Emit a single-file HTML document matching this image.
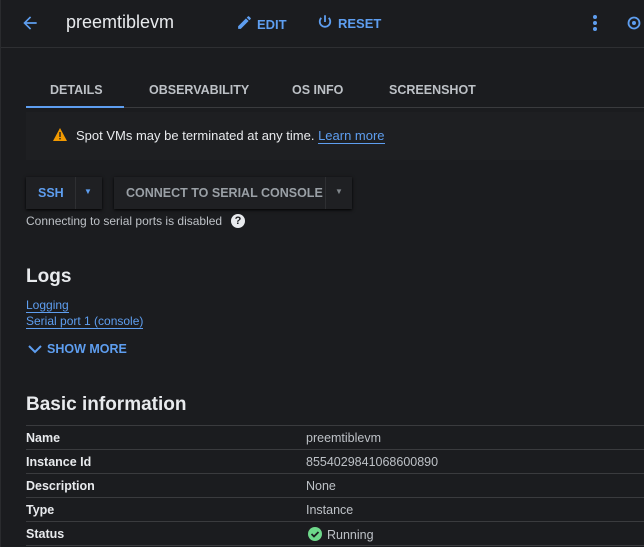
<!DOCTYPE html>
<html><head><style>
*{margin:0;padding:0;box-sizing:border-box}
body{width:644px;height:547px;overflow:hidden;background:#1b1c1f;font-family:"Liberation Sans",sans-serif;color:#e8eaed;position:relative;border-left:1px solid #2a2b2e}
.a{position:absolute;white-space:nowrap}
.blue{color:#5e9ef0}
.tab{font-size:12.5px;font-weight:bold;color:#bdc1c6;top:83px}
.hr{position:absolute;height:1px;background:#3a3b3e}
.row{position:absolute;left:25px;right:0;height:24px;border-top:1px solid #3a3b3e;font-size:12.5px}
.row b{position:absolute;left:0;top:5px;color:#e8eaed}
.row span{position:absolute;left:280px;top:5px;color:#bdc1c6}
</style></head><body>
<svg class="a" style="left:19px;top:13px" width="20" height="20" viewBox="0 0 24 24"><path d="M20 11H7.8l5.6-5.6L12 4l-8 8 8 8 1.4-1.4L7.8 13H20z" fill="#5e9ef0"/></svg>
<div class="a" style="left:65px;top:12px;font-size:18px;color:#e8eaed">preemtiblevm</div>
<svg class="a" style="left:235px;top:14px" width="17" height="17" viewBox="0 0 24 24"><path d="M3 17.25V21h3.75L17.8 9.94l-3.75-3.75zM20.7 7.04a1 1 0 000-1.41l-2.34-2.34a1 1 0 00-1.41 0l-1.83 1.83 3.75 3.75z" fill="#5e9ef0"/></svg>
<div class="a blue" style="left:256px;top:17px;font-size:13px;font-weight:bold">EDIT</div>
<svg class="a" style="left:315px;top:13px" width="18" height="18" viewBox="0 0 24 24"><path d="M12 3v9M7 6.5a7 7 0 1010 0" stroke="#5e9ef0" stroke-width="2.4" fill="none"/></svg>
<div class="a blue" style="left:337px;top:16px;font-size:13px;font-weight:bold">RESET</div>
<svg class="a" style="left:590px;top:14px" width="8" height="18"><circle cx="4" cy="3" r="2" fill="#5e9ef0"/><circle cx="4" cy="9" r="2" fill="#5e9ef0"/><circle cx="4" cy="15" r="2" fill="#5e9ef0"/></svg>
<svg class="a" style="left:626px;top:16px" width="14" height="14" viewBox="0 0 14 14"><circle cx="7" cy="7" r="5.5" stroke="#5e9ef0" stroke-width="1.8" fill="none"/><circle cx="7" cy="7" r="2" fill="#5e9ef0"/></svg>
<div class="hr" style="left:0;right:0;top:47px;background:#2e2f32"></div>
<div class="a tab blue" style="left:49px">DETAILS</div>
<div class="a tab" style="left:148px">OBSERVABILITY</div>
<div class="a tab" style="left:291px">OS INFO</div>
<div class="a tab" style="left:388px">SCREENSHOT</div>
<div class="hr" style="left:25px;right:0;top:107px"></div>
<div class="a" style="left:25px;top:106px;width:98px;height:2px;background:#5e9ef0"></div>
<div class="a" style="left:25px;top:112px;right:0;height:48px;background:#1e1f22"></div>
<svg class="a" style="left:52px;top:128px" width="14" height="13" viewBox="0 0 14 13"><path d="M7 0L14 13H0z" fill="#f29900"/><rect x="6.3" y="4" width="1.4" height="5" fill="#1e1f22"/><rect x="6.3" y="10" width="1.4" height="1.4" fill="#1e1f22"/></svg>
<div class="a" style="left:75px;top:128px;font-size:13px">Spot VMs may be terminated at any time. <span class="blue" style="border-bottom:1px solid #5e9ef0">Learn more</span></div>
<div class="a" style="left:25px;top:177px;width:76px;height:32px;background:#1f2023;box-shadow:0 1px 3px #000"></div>
<div class="a blue" style="left:37px;top:186px;font-size:12.5px;font-weight:bold">SSH</div>
<div class="a" style="left:74px;top:177px;width:1px;height:32px;background:#2e2f32"></div>
<div class="a blue" style="left:83px;top:187px;font-size:8px">▼</div>
<div class="a" style="left:113px;top:177px;width:238px;height:32px;background:#1f2023;box-shadow:0 1px 3px #000"></div>
<div class="a" style="left:125px;top:186px;font-size:12.5px;font-weight:bold;color:#9aa0a6">CONNECT TO SERIAL CONSOLE</div>
<div class="a" style="left:324px;top:177px;width:1px;height:32px;background:#2e2f32"></div>
<div class="a" style="left:334px;top:187px;font-size:8px;color:#80868b">▼</div>
<div class="a" style="left:25px;top:214px;font-size:12px;color:#bdc1c6">Connecting to serial ports is disabled</div>
<div class="a" style="left:230px;top:214px;width:14px;height:14px;border-radius:50%;background:#e8eaed;color:#1b1c1f;font-size:11px;font-weight:bold;text-align:center;line-height:14px">?</div>
<div class="a" style="left:25px;top:266px;font-size:19px;font-weight:bold">Logs</div>
<div class="a blue" style="left:25px;top:298px;font-size:12px;border-bottom:1px solid #5e9ef0;line-height:14px">Logging</div>
<div class="a blue" style="left:25px;top:314px;font-size:12px;border-bottom:1px solid #5e9ef0;line-height:14px">Serial port 1 (console)</div>
<svg class="a" style="left:27px;top:345px" width="14" height="10"><path d="M1 1l6 6 6-6" stroke="#5e9ef0" stroke-width="2" fill="none"/></svg>
<div class="a blue" style="left:46px;top:342px;font-size:12.5px;font-weight:bold">SHOW MORE</div>
<div class="a" style="left:25px;top:394px;font-size:19px;font-weight:bold">Basic information</div>
<div class="row" style="top:425px"><b>Name</b><span>preemtiblevm</span></div>
<div class="row" style="top:449px"><b>Instance Id</b><span>8554029841068600890</span></div>
<div class="row" style="top:473px"><b>Description</b><span>None</span></div>
<div class="row" style="top:497px"><b>Type</b><span>Instance</span></div>
<div class="row" style="top:521px"><b>Status</b><span style="left:282px"><svg width="14" height="14" style="vertical-align:-2px;margin-right:5px" viewBox="0 0 14 14"><circle cx="7" cy="7" r="7" fill="#6ed78a"/><path d="M3.5 7l2.5 2.5 4.5-4.5" stroke="#1b1c1f" stroke-width="1.8" fill="none"/></svg>Running</span></div>
<div class="hr" style="left:25px;right:0;top:545px"></div>
</body></html>
